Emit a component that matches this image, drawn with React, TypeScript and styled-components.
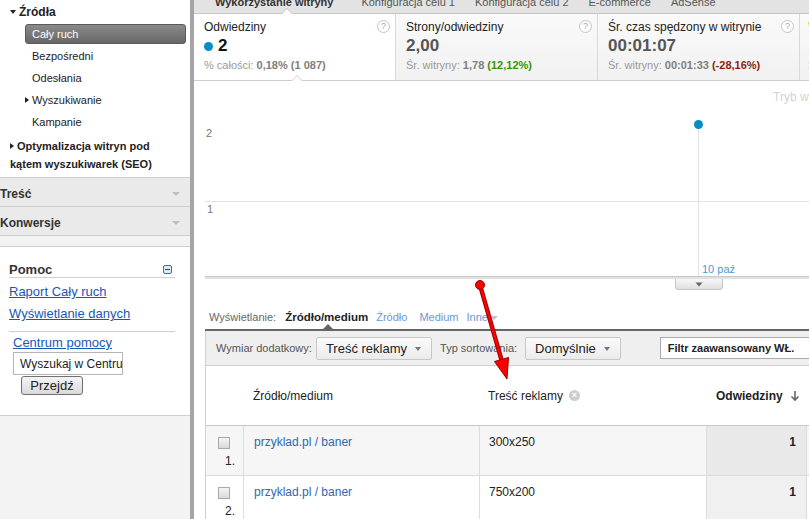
import React from 'react';
import styled, { createGlobalStyle } from 'styled-components';

const GlobalStyle = createGlobalStyle`
  html, body { margin: 0; padding: 0; background: #fff; }
  body { font-family: "Liberation Sans", Arial, sans-serif; overflow: hidden; }
  * { box-sizing: border-box; }
`;

const Page = styled.div`
  position: relative;
  display: flex;
  width: 809px;
  height: 519px;
  overflow: hidden;
  background: #fff;
`;

/* ---------- sidebar ---------- */

const Sidebar = styled.aside`
  flex: none;
  width: 194px;
  display: flex;
  flex-direction: column;
  background: #f3f3f3;
  border-right: 4px solid #a5a5a5;
`;

const NavTree = styled.div`
  height: 178px;
  padding-top: 1px;
  background: #fff;
  border-bottom: 1px solid #cfcfcf;
  color: #222;
`;

const Caret = styled.span<{ $dir: 'down' | 'right' }>`
  display: inline-block;
  width: 0;
  height: 0;
  vertical-align: middle;
  margin: -2px 3px 0 0;
  border-style: solid;
  ${p =>
    p.$dir === 'down'
      ? 'border-width: 4px 3.5px 0 3.5px; border-color: #222 transparent transparent transparent;'
      : 'border-width: 3.5px 0 3.5px 4px; border-color: transparent transparent transparent #222;'}
`;

const NavRoot = styled.div`
  height: 22px;
  line-height: 22px;
  padding-left: 10px;
  font-size: 12px;
  font-weight: 700;
`;

const NavItem = styled.div<{ $active?: boolean; $caret?: boolean }>`
  height: ${p => (p.$active ? '20px' : '22px')};
  line-height: ${p => (p.$active ? '18px' : '22px')};
  margin: ${p => (p.$active ? '1px 4px 1px 25px' : '0')};
  padding-left: ${p => (p.$active ? '6px' : p.$caret ? '25px' : '32px')};
  font-size: 11px;
  color: ${p => (p.$active ? '#fff' : '#222')};
  background: ${p => (p.$active ? 'linear-gradient(#8a8a8a, #676767)' : 'transparent')};
  border: ${p => (p.$active ? '1px solid #5a5a5a' : 'none')};
  border-radius: 3px;
`;

const SeoItem = styled.div`
  padding: 4px 0 0 10px;
  line-height: 18px;
  font-size: 11px;
  font-weight: 700;
`;

const SectionHead = styled.div`
  height: 29px;
  display: flex;
  align-items: center;
  justify-content: space-between;
  padding: 3px 10px 0 0;
  background: #eaeaea;
  border-bottom: 1px solid #cfcfcf;
  font-size: 12px;
  font-weight: 700;
  color: #333;
`;

const GreyArrow = styled.span`
  width: 0;
  height: 0;
  border-style: solid;
  border-width: 4px 4px 0 4px;
  border-color: #bdbdbd transparent transparent transparent;
`;

const Strip = styled.div`
  height: 11px;
  background: #f3f3f3;
  border-bottom: 1px solid #cfcfcf;
`;

const HelpPanel = styled.div`
  height: 169px;
  padding: 15px 15px 0 9px;
  background: #fff;
  border-bottom: 1px solid #cfcfcf;
`;

const HelpTitle = styled.div`
  height: 16px;
  display: flex;
  align-items: center;
  justify-content: space-between;
  border-bottom: 1px solid #cfcfcf;
  font-size: 13px;
  font-weight: 700;
  color: #333;
  padding-bottom: 1px;
`;

const MinusBox = styled.span`
  width: 9px;
  height: 9px;
  margin-right: 3px;
  border: 1px solid #4d6f93;
  border-radius: 2px;
  background: #dfe9f3;
  display: flex;
  align-items: center;
  justify-content: center;
  &::after {
    content: '';
    width: 5px;
    height: 1px;
    background: #2f4a66;
  }
`;

const HelpLink = styled.a<{ $indent?: boolean }>`
  display: block;
  line-height: ${p => (p.$indent ? '16px' : '22px')};
  padding-left: ${p => (p.$indent ? '4px' : '0')};
  font-size: 13px;
  color: #1a56b8;
  text-decoration: underline;
`;

const HelpLinks = styled.div`
  padding-top: 3px;
  padding-bottom: 6px;
  border-bottom: 1px solid #cfcfcf;
  margin-bottom: 3px;
`;

const SearchInput = styled.input`
  display: block;
  width: 110px;
  height: 23px;
  margin: 1px 0 0 4px;
  padding: 0 0 0 6px;
  border: 1px solid #b5b5b5;
  font-family: "Liberation Sans", Arial, sans-serif;
  font-size: 12px;
  color: #222;
  outline: none;
`;

const GoButton = styled.button`
  display: block;
  width: 62px;
  height: 19px;
  margin: 1px 0 0 12px;
  padding: 0;
  border: 1px solid #707070;
  border-radius: 3px;
  background: linear-gradient(#f4f4f4, #dadada);
  font-family: "Liberation Sans", Arial, sans-serif;
  font-size: 13px;
  color: #222;
`;

/* ---------- main ---------- */

const Main = styled.main`
  flex: 1;
  min-width: 0;
  display: flex;
  flex-direction: column;
  overflow: hidden;
`;

const TabBar = styled.nav`
  position: relative;
  flex: none;
  height: 14px;
  display: flex;
  align-items: flex-start;
  gap: 2px;
  padding-left: 9px;
  background: #e3e3e3;
  border-bottom: 1px solid #c6c6c6;
  &::before,
  &::after {
    content: '';
    position: absolute;
    bottom: -1px;
    width: 0;
    height: 0;
    border-style: solid;
  }
  &::before {
    left: 87px;
    border-width: 0 6px 6px;
    border-color: transparent transparent #c6c6c6;
  }
  &::after {
    left: 88px;
    border-width: 0 5px 5px;
    border-color: transparent transparent #fff;
  }
`;

const Tab = styled.span<{ $active?: boolean }>`
  margin-top: -6px;
  line-height: 16px;
  padding: ${p => (p.$active ? '0 17px 0 12px' : '0 9px')};
  font-size: 11px;
  font-weight: ${p => (p.$active ? 700 : 400)};
  color: ${p => (p.$active ? '#333' : '#555')};
  white-space: nowrap;
`;

const MetricsRow = styled.div`
  position: relative;
  flex: none;
  height: 67px;
  display: flex;
  border-bottom: 1px solid #cdcdcd;
  &::before,
  &::after {
    content: '';
    position: absolute;
    bottom: -1px;
    width: 0;
    height: 0;
    border-style: solid;
    z-index: 1;
  }
  &::before {
    left: 97px;
    border-width: 0 6px 6px;
    border-color: transparent transparent #cdcdcd;
  }
  &::after {
    left: 98px;
    border-width: 0 5px 5px;
    border-color: transparent transparent #fff;
  }
`;

const Metric = styled.div<{ $active?: boolean; $edge?: boolean }>`
  position: relative;
  flex: none;
  width: 202px;
  padding: 6px 10px 0 ${p => (p.$edge ? 8 : 10)}px;
  border-right: 1px solid #d9d9d9;
  background: ${p => (p.$active ? '#fff' : 'linear-gradient(#fafafa, #f1f1f1)')};
  white-space: nowrap;
  overflow: hidden;
`;

const MetricTitle = styled.div<{ $tint?: string }>`
  font-size: 12px;
  line-height: 14px;
  color: ${p => p.$tint || '#222'};
`;

const MetricValue = styled.div<{ $active?: boolean; $tint?: string }>`
  margin-top: 2px;
  display: flex;
  align-items: center;
  font-size: 17px;
  line-height: 20px;
  font-weight: 700;
  color: ${p => p.$tint || (p.$active ? '#111' : '#555')};
`;

const Dot = styled.span`
  width: 9px;
  height: 9px;
  margin-right: 5px;
  border-radius: 50%;
  background: #058dc7;
`;

const MetricSub = styled.div<{ $tint?: string }>`
  margin-top: 2px;
  font-size: 11px;
  line-height: 14px;
  color: ${p => p.$tint || '#999'};
  b {
    color: #808080;
  }
`;

const Delta = styled.b<{ $tone: 'up' | 'down' }>`
  && {
    color: ${p => (p.$tone === 'up' ? '#3d9400' : '#8f1d05')};
  }
`;

const HelpIcon = styled.span`
  position: absolute;
  top: 6px;
  right: 5px;
  width: 13px;
  height: 13px;
  border: 1px solid #c4c4c4;
  border-radius: 50%;
  font-size: 9px;
  line-height: 11px;
  text-align: center;
  color: #a8a8a8;
  background: #fff;
`;

const ChartBox = styled.div`
  flex: none;
  height: 210px;
`;

const Section = styled.div`
  margin-left: 11px;
  width: 640px;
`;

const ViewRow = styled.div`
  position: relative;
  height: 40px;
  display: flex;
  gap: 8px;
  padding: 19px 0 0 4px;
  border-bottom: 2px solid #666;
  font-size: 11px;
  line-height: 14px;
  color: #666;
  &::after {
    content: '';
    position: absolute;
    left: 118px;
    bottom: 0;
    width: 0;
    height: 0;
    border-style: solid;
    border-width: 0 5px 5px;
    border-color: transparent transparent #666;
  }
`;

const ViewOption = styled.span<{ $active?: boolean }>`
  color: ${p => (p.$active ? '#222' : '#6a9ad3')};
  font-weight: ${p => (p.$active ? 700 : 400)};
  font-size: ${p => (p.$active ? '11.5px' : '11px')};
`;

const MoreArrow = styled.span`
  display: inline-block;
  margin-left: 2px;
  vertical-align: middle;
  border-style: solid;
  border-width: 4px 4px 0;
  border-color: #c3c3c3 transparent transparent;
`;

const Toolbar = styled.div`
  height: 35px;
  display: flex;
  align-items: center;
  gap: 8px;
  padding-left: 10px;
  background: #efefef;
  border-left: 1px solid #d0d0d0;
  border-bottom: 1px solid #cfcfcf;
  font-size: 11px;
  color: #555;
  white-space: nowrap;
`;

const Label = styled.span<{ $gap?: number }>`
  margin-right: ${p => p.$gap ?? 0}px;
`;

const DropButton = styled.div`
  height: 23px;
  display: flex;
  align-items: center;
  gap: 8px;
  padding: 0 10px 0 9px;
  border: 1px solid #c8c8c8;
  border-radius: 2px;
  background: linear-gradient(#fbfbfb, #ebebeb);
  font-size: 13px;
  color: #222;
`;

const DropArrow = styled.span`
  border-style: solid;
  border-width: 4px 3.5px 0;
  border-color: #777 transparent transparent;
  margin-top: 2px;
`;

const FilterBox = styled.div`
  height: 22px;
  width: 170px;
  margin-left: 31px;
  padding-left: 7px;
  display: flex;
  align-items: center;
  border: 1px solid #a9a9a9;
  background: #fff;
  font-size: 11px;
  font-weight: 700;
  color: #222;
`;

const Table = styled.div`
  border-left: 1px solid #d0d0d0;
  font-size: 12px;
  color: #222;
`;

const HeadRow = styled.div`
  height: 60px;
  display: grid;
  grid-template-columns: 37px 236px 227px 100px 1fr;
  align-items: center;
  border-bottom: 1px solid #c8c8c8;
`;

const HeadCell = styled.div<{ $pad?: number; $bold?: boolean }>`
  display: flex;
  align-items: center;
  gap: 6px;
  padding-left: ${p => p.$pad ?? 0}px;
  font-weight: ${p => (p.$bold ? 700 : 400)};
`;

const SortHead = styled(HeadCell)`
  justify-content: space-between;
  padding-right: 6px;
`;

const ClearIcon = styled.span`
  width: 11px;
  height: 11px;
  border-radius: 50%;
  background: #cdcdcd;
  color: #fff;
  font-size: 9px;
  line-height: 11px;
  text-align: center;
  font-weight: 700;
`;

const DataRow = styled.div<{ $odd?: boolean }>`
  height: 50px;
  display: grid;
  grid-template-columns: 37px 236px 227px 100px 1fr;
  background: ${p => (p.$odd ? '#f6f6f6' : '#fff')};
  border-bottom: 1px solid #dcdcdc;
`;

const Cell = styled.div<{ $pad?: number }>`
  padding: 9px 0 0 ${p => p.$pad ?? 9}px;
  line-height: 14px;
  border-left: 1px solid #dcdcdc;
`;

const CheckCell = styled.div`
  padding: 11px 8px 0 12px;
  display: flex;
  flex-direction: column;
`;

const CheckBox = styled.span`
  width: 12px;
  height: 12px;
  border: 1px solid #a8a8a8;
  background: linear-gradient(#f5f5f5, #d9d9d9);
`;

const RowNum = styled.span`
  margin-top: 5px;
  line-height: 14px;
  text-align: right;
  color: #222;
`;

const RowLink = styled.a`
  color: #2e68b1;
  text-decoration: none;
`;

const VisitCell = styled(Cell)<{ $odd?: boolean }>`
  padding: 9px 10px 0 0;
  text-align: right;
  font-weight: 700;
  background: ${p => (p.$odd ? '#e9e9e9' : '#f0f0f0')};
`;

const Pointer = styled.svg`
  position: absolute;
  left: 470px;
  top: 278px;
  pointer-events: none;
`;

const rows = [
  { n: 1, source: 'przyklad.pl / baner', content: '300x250', visits: 1 },
  { n: 2, source: 'przyklad.pl / baner', content: '750x200', visits: 1 },
];

const Chart = () => (
  <svg width="615" height="210" viewBox="0 0 615 210">
    <text x="579" y="20" fontSize="12" fill="#d2d2d2" fontFamily="Liberation Sans, Arial, sans-serif">
      Tryb wykresu
    </text>
    <text x="12" y="56" fontSize="11" fill="#777" fontFamily="Liberation Sans, Arial, sans-serif">2</text>
    <line x1="11" y1="120.5" x2="615" y2="120.5" stroke="#e3e3e3" />
    <text x="13" y="132" fontSize="11" fill="#777" fontFamily="Liberation Sans, Arial, sans-serif">1</text>
    <line x1="504.5" y1="43" x2="504.5" y2="195" stroke="#e2e2e2" />
    <rect x="11" y="195" width="604" height="3" fill="#e1e1e1" />
    <line x1="11" y1="195.5" x2="615" y2="195.5" stroke="#c9c9c9" />
    <circle cx="504.5" cy="43.5" r="4.5" fill="#058dc7" />
    <text x="508" y="192" fontSize="11" fill="#4b9ad6" fontFamily="Liberation Sans, Arial, sans-serif">10 paź</text>
    <defs>
      <linearGradient id="tabg" x1="0" y1="0" x2="0" y2="1">
        <stop offset="0" stopColor="#f7f7f7" />
        <stop offset="1" stopColor="#dedede" />
      </linearGradient>
    </defs>
    <path d="M481.5 198 V206 Q481.5 208.5 484 208.5 H526 Q528.5 208.5 528.5 206 V198" fill="url(#tabg)" stroke="#c6c6c6" />
    <path d="M501.5 201.5 H508.5 L505 205.5 Z" fill="#666" />
  </svg>
);

const App = () => (
  <Page>
    <GlobalStyle />
    <Sidebar>
      <NavTree>
        <NavRoot>
          <Caret $dir="down" />
          Źródła
        </NavRoot>
        <NavItem $active>Cały ruch</NavItem>
        <NavItem>Bezpośredni</NavItem>
        <NavItem>Odesłania</NavItem>
        <NavItem $caret>
          <Caret $dir="right" />
          Wyszukiwanie
        </NavItem>
        <NavItem>Kampanie</NavItem>
        <SeoItem>
          <Caret $dir="right" />
          Optymalizacja witryn pod
          <br />
          kątem wyszukiwarek (SEO)
        </SeoItem>
      </NavTree>
      <SectionHead>
        Treść
        <GreyArrow />
      </SectionHead>
      <SectionHead>
        Konwersje
        <GreyArrow />
      </SectionHead>
      <Strip />
      <HelpPanel>
        <HelpTitle>
          Pomoc
          <MinusBox />
        </HelpTitle>
        <HelpLinks>
          <HelpLink>Raport Cały ruch</HelpLink>
          <HelpLink>Wyświetlanie danych</HelpLink>
        </HelpLinks>
        <HelpLink $indent>Centrum pomocy</HelpLink>
        <SearchInput readOnly defaultValue="Wyszukaj w Centrum pomocy" />
        <GoButton>Przejdź</GoButton>
      </HelpPanel>
    </Sidebar>

    <Main>
      <TabBar>
        <Tab $active>Wykorzystanie witryny</Tab>
        <Tab>Konfiguracja celu 1</Tab>
        <Tab>Konfiguracja celu 2</Tab>
        <Tab>E-commerce</Tab>
        <Tab>AdSense</Tab>
      </TabBar>

      <MetricsRow>
        <Metric $active>
          <MetricTitle>Odwiedziny</MetricTitle>
          <MetricValue $active>
            <Dot />2
          </MetricValue>
          <MetricSub>
            % całości: <b>0,18% (1 087)</b>
          </MetricSub>
          <HelpIcon>?</HelpIcon>
        </Metric>
        <Metric>
          <MetricTitle>Strony/odwiedziny</MetricTitle>
          <MetricValue>2,00</MetricValue>
          <MetricSub>
            Śr. witryny: <b>1,78</b> <Delta $tone="up">(12,12%)</Delta>
          </MetricSub>
          <HelpIcon>?</HelpIcon>
        </Metric>
        <Metric>
          <MetricTitle>Śr. czas spędzony w witrynie</MetricTitle>
          <MetricValue>00:01:07</MetricValue>
          <MetricSub>
            Śr. witryny: <b>00:01:33</b> <Delta $tone="down">(-28,16%)</Delta>
          </MetricSub>
          <HelpIcon>?</HelpIcon>
        </Metric>
        <Metric $edge>
          <MetricTitle $tint="#f2b050">Współczynnik odrzuceń</MetricTitle>
          <MetricValue $tint="#f2b050">1,00</MetricValue>
          <MetricSub $tint="#f2b050">Śr. witryny</MetricSub>
        </Metric>
      </MetricsRow>

      <ChartBox>
        <Chart />
      </ChartBox>

      <Section>
        <ViewRow>
          <Label $gap={1}>Wyświetlanie:</Label>
          <ViewOption $active>Źródło/medium</ViewOption>
          <ViewOption>Źródło</ViewOption>
          <ViewOption style={{ marginLeft: 4 }}>Medium</ViewOption>
          <ViewOption>
            Inne
            <MoreArrow />
          </ViewOption>
        </ViewRow>

        <Toolbar>
          <Label $gap={-4}>Wymiar dodatkowy:</Label>
          <DropButton>
            Treść reklamy
            <DropArrow />
          </DropButton>
          <Label>Typ sortowania:</Label>
          <DropButton>
            Domyślnie
            <DropArrow />
          </DropButton>
          <FilterBox>Filtr zaawansowany WŁ.</FilterBox>
        </Toolbar>

        <Table>
          <HeadRow>
            <HeadCell />
            <HeadCell $pad={10}>Źródło/medium</HeadCell>
            <HeadCell $pad={9}>
              Treść reklamy
              <ClearIcon>×</ClearIcon>
            </HeadCell>
            <SortHead $pad={10} $bold>
              Odwiedziny
              <svg width="10" height="12" viewBox="0 0 10 12">
                <path d="M5 1 V10 M1.5 6.5 L5 10 L8.5 6.5" fill="none" stroke="#666" strokeWidth="1.6" />
              </svg>
            </SortHead>
            <HeadCell />
          </HeadRow>
          {rows.map(r => (
            <DataRow key={r.n} $odd={r.n % 2 === 1}>
              <CheckCell>
                <CheckBox />
                <RowNum>{r.n}.</RowNum>
              </CheckCell>
              <Cell $pad={10}>
                <RowLink>{r.source}</RowLink>
              </Cell>
              <Cell>{r.content}</Cell>
              <VisitCell $odd={r.n % 2 === 1}>{r.visits}</VisitCell>
              <Cell />
            </DataRow>
          ))}
        </Table>
      </Section>
    </Main>

    <Pointer width="50" height="110" viewBox="0 0 50 110">
      <line x1="10" y1="7" x2="31.5" y2="82" stroke="#9a0000" strokeWidth="4.5" strokeLinecap="round" />
      <line x1="10" y1="7" x2="31.5" y2="82" stroke="#f00" strokeWidth="2.5" strokeLinecap="round" />
      <circle cx="10" cy="7" r="4.5" fill="#f00" stroke="#9a0000" strokeWidth="1" />
      <path d="M37 101 L38.5 79.5 L24.5 83.5 Z" fill="#f00" stroke="#9a0000" strokeWidth="1" strokeLinejoin="round" />
    </Pointer>
  </Page>
);

export default App;
